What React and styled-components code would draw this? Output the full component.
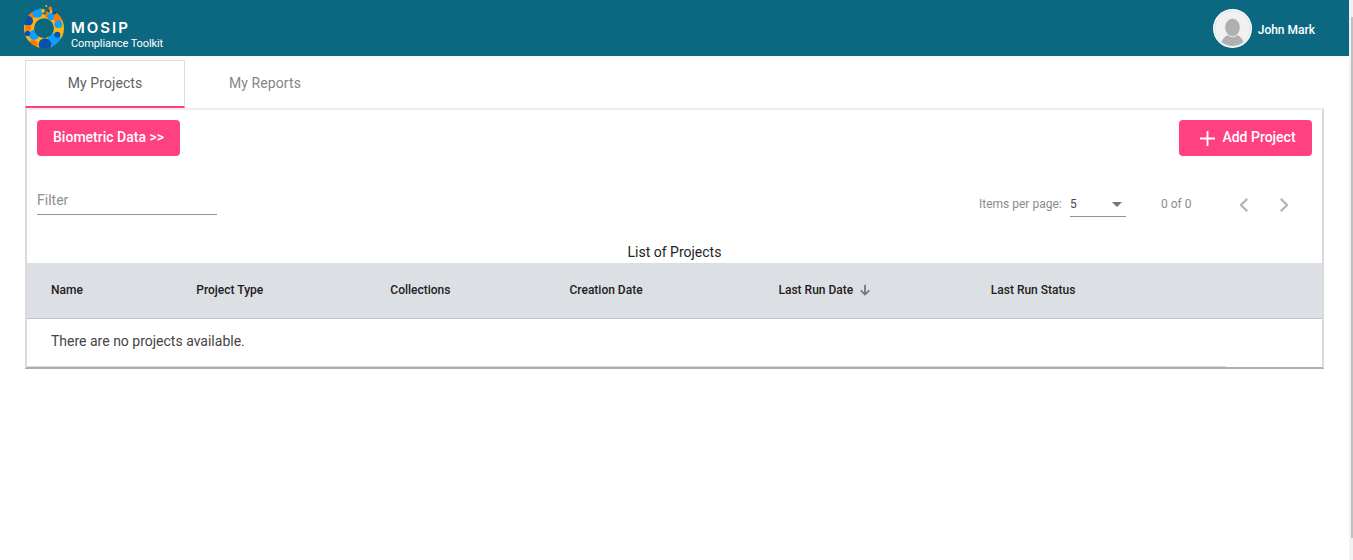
import React from 'react';
import styled, { createGlobalStyle } from 'styled-components';

const GlobalStyle = createGlobalStyle`
  * { box-sizing: border-box; }
  body { margin: 0; background: #fff; font-family: Roboto, sans-serif; overflow: hidden; }
`;

const Shell = styled.div`
  display: flex;
  height: 560px;
`;
const Page = styled.div`
  flex: 1;
  min-width: 0;
`;
const Scrollbar = styled.div`
  width: 4px;
  padding: 17px 0 0 2px;
  background: #f1f1f1;
`;
const Thumb = styled.div`
  height: 521px;
  background: #c1c1c1;
`;

const Header = styled.header`
  display: flex;
  justify-content: space-between;
  height: 56px;
  padding: 0 34px 0 23px;
  background: #0c6881;
  color: #fff;
  box-shadow: 0 1px 4px rgba(0, 0, 0, 0.06);
`;
const Brand = styled.div`
  display: flex;
  gap: 6px;
  padding-top: 4px;
`;
const BrandText = styled.div`
  padding-top: 15px;
`;
const Wordmark = styled.div`
  font: 600 15px/17px Inter, sans-serif;
  letter-spacing: 2px;
  white-space: nowrap;
`;
const Product = styled.div`
  font-size: 11px;
  line-height: 15px;
  letter-spacing: -0.1px;
  white-space: nowrap;
`;
const User = styled.div`
  display: flex;
  align-items: center;
  gap: 6px;
  height: 57px;
`;
const UserName = styled.span`
  padding-top: 3px;
  font-size: 12px;
  font-weight: 500;
  line-height: 16px;
  white-space: nowrap;
`;

const Tabs = styled.nav`
  display: flex;
  height: 52px;
  padding: 4px 0 0 25px;
`;
const Tab = styled.div`
  width: 160px;
  height: 48px;
  border: 1px solid ${(p) => (p.$active ? '#dedede' : 'transparent')};
  border-bottom: 2px solid ${(p) => (p.$active ? '#ff4081' : 'transparent')};
  color: ${(p) => (p.$active ? '#616161' : '#858585')};
  font-size: 14px;
  letter-spacing: 0.08px;
  line-height: 45px;
  text-align: center;
`;

const Panel = styled.main`
  display: flex;
  flex-direction: column;
  width: 1299px;
  height: 261px;
  margin-left: 25px;
  border: 2px solid;
  border-color: #eeeeee #dadada #adadad #dadada;
`;
const Actions = styled.div`
  display: flex;
  justify-content: space-between;
  padding: 10px 10px 0;
`;
const Button = styled.button`
  display: flex;
  align-items: center;
  justify-content: center;
  gap: 7px;
  width: ${(p) => p.$width}px;
  height: 36px;
  padding: 0 0 0 ${(p) => p.$indent || 0}px;
  border: 0;
  border-radius: 4px;
  background: #ff4081;
  color: #fff;
  font: 500 14px/34px Roboto, sans-serif;
  white-space: nowrap;
`;
const ButtonLabel = styled.span`
  height: 36px;
`;

const Controls = styled.div`
  display: flex;
  justify-content: space-between;
  height: 87px;
  padding: 26px 34px 0 10px;
`;
const Filter = styled.div`
  width: 180px;
  height: 33px;
  padding-top: 9px;
  border-bottom: 1px solid #949494;
  color: #8f8f8f;
  font-size: 14px;
  line-height: 18px;
`;
const Paginator = styled.div`
  display: flex;
  height: 35px;
  color: #8c8c8c;
  font-size: 12px;
  line-height: 44px;
  white-space: nowrap;
`;
const PerPage = styled.span`
  width: 91px;
`;
const PageSize = styled.div`
  display: flex;
  align-items: center;
  justify-content: space-between;
  width: 56px;
  height: 35px;
  padding: 0 4px 0 0;
  border-bottom: 1px solid #949494;
  color: #4a4a4a;
`;
const SizeValue = styled.span`
  height: 35px;
`;
const Caret = styled.span`
  margin-top: 11px;
  border: 5px solid transparent;
  border-top-color: #757575;
  border-bottom: 0;
`;
const Range = styled.span`
  width: 79px;
  margin-left: 35px;
`;
const PageArrows = styled.div`
  display: flex;
  gap: 32px;
  padding-top: 16px;
`;

const Title = styled.h2`
  height: 20px;
  margin: 0;
  color: #242424;
  font-size: 14px;
  font-weight: 400;
  line-height: 19px;
  text-align: center;
`;
const TableHead = styled.div`
  display: grid;
  grid-template-columns: 145.3px 194px 179.2px 209px 212.3px 1fr;
  height: 56px;
  padding-left: 24px;
  border-bottom: 1px solid #bfc1c6;
  background: #dcdfe4;
`;
const Column = styled.div`
  display: flex;
  align-items: center;
  gap: 7px;
  height: 54px;
  color: #1f2022;
  font-size: 12px;
  font-weight: 500;
  white-space: nowrap;
`;
const Empty = styled.div`
  flex: 1;
  padding: 13px 24px 0;
  color: #444;
  font-size: 14px;
  line-height: 19px;
`;
const Track = styled.div`
  width: 1199px;
  height: 1px;
  background: #dadada;
`;

const Logo = () => (
  <svg width="42" height="46" viewBox="0 0 42 46">
    <defs>
      <mask id="ring">
        <circle cx="21" cy="24.2" r="15" fill="none" stroke="#fff" strokeWidth="10" />
      </mask>
    </defs>
    <g mask="url(#ring)">
      <rect width="42" height="46" fill="#fbb615" />
      <circle cx="8" cy="10" r="5" fill="#ff7900" />
      <circle cx="14.5" cy="8.5" r="5.2" fill="#0aa0fb" />
      <path d="M18 3h9v5l-5 3-3-2z" fill="#0c6881" />
      <path d="M28 3h8v7l-5 1z" fill="#0c6881" />
      <circle cx="24" cy="12" r="2" fill="#ff7900" />
      <circle cx="28" cy="12.5" r="3.6" fill="#0aa0fb" />
      <ellipse cx="35" cy="14" rx="4.5" ry="5" fill="#ff7900" />
      <circle cx="5" cy="17" r="5" fill="#0850b0" />
      <circle cx="35.3" cy="20.3" r="3.8" fill="#0aa0fb" />
      <circle cx="5" cy="24" r="3" fill="#ff7900" />
      <circle cx="11" cy="31" r="5" fill="#0aa0fb" />
      <circle cx="4.5" cy="29.5" r="2.7" fill="#0850b0" />
      <circle cx="10" cy="40.5" r="4.5" fill="#ff7900" />
      <circle cx="31.5" cy="36" r="6.8" fill="#0aa0fb" />
      <circle cx="34.3" cy="30.7" r="3" fill="#0850b0" />
      <circle cx="22" cy="40.5" r="6.3" fill="#0850b0" />
    </g>
    <circle cx="20" cy="6.8" r="2" fill="#fbb615" />
    <circle cx="24" cy="9" r="1.4" fill="#ff7900" />
    <circle cx="27.3" cy="4.4" r="1.8" fill="#ff7900" />
    <circle cx="23.3" cy="2" r="1" fill="#fbb615" />
    <circle cx="31" cy="8.4" r="1.9" fill="#0850b0" />
  </svg>
);

const Avatar = () => (
  <svg width="39" height="39" viewBox="0 0 39 39">
    <defs><clipPath id="portrait"><circle cx="19.5" cy="19.5" r="17.4" /></clipPath></defs>
    <circle cx="19.5" cy="19.5" r="19.5" fill="#fff" />
    <circle cx="19.5" cy="19.5" r="17.8" fill="#f1f1f1" stroke="#b5ced5" strokeWidth=".5" />
    <g clipPath="url(#portrait)">
      <path d="M8 39v-4c1-5 4-8 7-9h9c3 1 6 4 7 9v4z" fill="#b0b0b0" />
      <ellipse cx="19.5" cy="18.5" rx="7.8" ry="9.2" fill="#b0b0b0" stroke="#eee" strokeWidth="1" />
    </g>
  </svg>
);

const Chevron = ({ right }) => (
  <svg width="8" height="14" viewBox="0 0 8 14" fill="none" stroke="#b8b8b8" strokeWidth="2.3">
    <path d={right ? 'M.8.8 7 7 .8 13.2' : 'M7.2.8 1 7l6.2 6.2'} />
  </svg>
);
const PlusIcon = () => (
  <svg width="15" height="16" viewBox="0 0 15 16" stroke="#fff" strokeWidth="1.8">
    <path d="M7.5 1v15M0 8.5h15" />
  </svg>
);
const DownArrow = () => (
  <svg width="10" height="12" viewBox="0 0 10 12" fill="none" stroke="#757779" strokeWidth="1.8">
    <path d="M5 .8v10M.7 6.3 5 10.6l4.3-4.3" />
  </svg>
);

const columns = ['Name', 'Project Type', 'Collections', 'Creation Date', 'Last Run Date', 'Last Run Status'];

export default function App() {
  return (
    <Shell>
      <GlobalStyle />
      <Page>
        <Header>
          <Brand>
            <Logo />
            <BrandText>
              <Wordmark>MOSIP</Wordmark>
              <Product>Compliance Toolkit</Product>
            </BrandText>
          </Brand>
          <User><Avatar /><UserName>John Mark</UserName></User>
        </Header>
        <Tabs>
          <Tab $active>My Projects</Tab>
          <Tab>My Reports</Tab>
        </Tabs>
        <Panel>
          <Actions>
            <Button $width={143}><ButtonLabel>Biometric Data &gt;&gt;</ButtonLabel></Button>
            <Button $width={133} $indent={5}><PlusIcon /><ButtonLabel>Add Project</ButtonLabel></Button>
          </Actions>
          <Controls>
            <Filter>Filter</Filter>
            <Paginator>
              <PerPage>Items per page:</PerPage>
              <PageSize><SizeValue>5</SizeValue><Caret /></PageSize>
              <Range>0 of 0</Range>
              <PageArrows><Chevron /><Chevron right /></PageArrows>
            </Paginator>
          </Controls>
          <Title>List of Projects</Title>
          <TableHead>
            {columns.map((name) => (
              <Column key={name}>{name}{name === 'Last Run Date' && <DownArrow />}</Column>
            ))}
          </TableHead>
          <Empty>There are no projects available.</Empty>
          <Track />
        </Panel>
      </Page>
      <Scrollbar><Thumb /></Scrollbar>
    </Shell>
  );
}
